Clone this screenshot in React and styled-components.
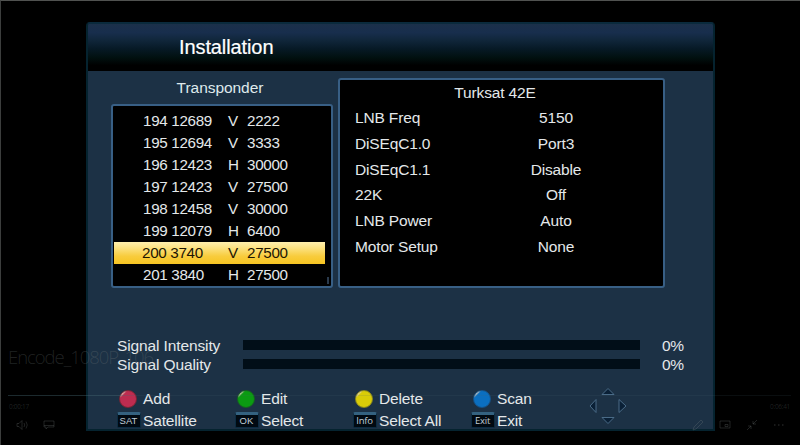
import styled, { createGlobalStyle, css } from "styled-components";

const GlobalStyle = createGlobalStyle`
  * {
    box-sizing: border-box;
  }
  body {
    margin: 0;
    background-color: #000;
    overflow: hidden;
  }
`;

const Screen = styled.div`
  position: relative;
  width: 800px;
  height: 445px;
  padding: 21px 0 0 85px;
  background-color: #000;
  border-top: 1px solid #505250;
  border-left: 1px solid #3c3e3d;
  font-family: "Liberation Sans", Arial, sans-serif;
  font-size: 15.5px;
  letter-spacing: -0.15px;
  color: #e4e8ea;
  overflow: hidden;
`;

const Window = styled.div`
  width: 629px;
  height: 409px;
  border: 2px solid #05232f;
  border-top-color: #0a2a3c;
  border-radius: 4px 4px 0 0;
  background-color: #1c3145;
  overflow: hidden;
`;

const Header = styled.div`
  height: 47px;
  padding-left: 91px;
  font-size: 20px;
  line-height: 46px;
  letter-spacing: -0.1px;
  -webkit-text-stroke: 0.2px #fff;
  color: #fff;
  background: linear-gradient(
    #1b3049 0%,
    #182e4d 18%,
    #10263a 35%,
    #071a27 52%,
    #01100f 72%,
    #000 88%
  );
`;

const Columns = styled.div`
  display: grid;
  grid-template-columns: 222px 327px;
  column-gap: 5px;
  height: 217px;
  padding-left: 23px;
`;

const ListTitle = styled.div`
  height: 33px;
  padding-right: 4px;
  line-height: 33px;
  text-align: center;
  letter-spacing: -0.05px;
  color: #dfe9ec;
`;

const panel = css`
  border: 2px solid #385f85;
  border-radius: 3px;
  background-color: #000;
`;

const List = styled.div`
  ${panel}
  position: relative;
  height: 184px;
  padding: 4px 6px 0 1px;
`;

const ListRow = styled.div`
  display: grid;
  grid-template-columns: 85px 19px 1fr;
  height: 22px;
  padding-left: 29px;
  font-size: 15.2px;
  line-height: 21px;
  letter-spacing: -0.32px;
  white-space: pre;
  ${({ $selected }) =>
    $selected &&
    css`
      padding-left: 28px;
      grid-template-columns: 86px 19px 1fr;
      color: #1c1603;
      background: linear-gradient(#fff0ae, #fbe07c 30%, #f8cc3c 65%, #f6c422);
    `}
`;

const ScrollThumb = styled.div`
  position: absolute;
  right: 2px;
  bottom: 2px;
  width: 2px;
  height: 7px;
  background-color: #2a3a4c;
`;

const Settings = styled.div`
  ${panel}
  height: 210px;
  margin-top: 7px;
`;

const SettingsTitle = styled.div`
  height: 25px;
  padding-right: 13px;
  line-height: 25px;
  text-align: center;
`;

const SettingRow = styled.div`
  display: grid;
  grid-template-columns: 140px 122px;
  height: 25.8px;
  padding-left: 15px;
  line-height: 26.6px;
  div + div {
    text-align: center;
  }
`;

const Signals = styled.div`
  padding: 48px 0 0 29px;
`;

const SignalRow = styled.div`
  display: grid;
  grid-template-columns: 125.5px 397.5px 1fr;
  align-items: center;
  height: 19px;
  line-height: 19px;
  letter-spacing: -0.12px;
`;

const Bar = styled.div`
  height: 10px;
  margin-top: -2px;
  background-color: #010e18;
`;

const Percent = styled.div`
  padding-left: 22px;
  letter-spacing: -0.3px;
`;

const Footer = styled.div`
  display: flex;
  padding: 13px 0 0 29px;
`;

const KeyColumn = styled.div`
  width: 118px;
  padding-top: 1px;
`;

const KeyRow = styled.div`
  display: grid;
  grid-template-columns: 26px 1fr;
  align-items: center;
  height: 22px;
  line-height: 22px;
  white-space: nowrap;
`;

const ColorKey = styled.div`
  width: 18px;
  height: 18px;
  margin: -1px 0 0 2px;
  border-radius: 50%;
  border: 1px solid ${({ $edge }) => $edge};
  background: linear-gradient(
    135deg,
    #e6d6c4 0 15%,
    ${({ $color }) => $color} 23%
  );
`;

const KeyCap = styled.div`
  display: flex;
  justify-content: center;
  width: 24px;
  height: 16px;
  margin: -2px 0 0 -0.5px;
  border: solid #0c2c42;
  border-width: 0 1px 1px;
  border-top: 3px solid #346280;
  border-radius: 2px;
  background-color: #010a12;
  font-family: ${({ $small }) =>
    $small ? '"Open Sans", sans-serif' : '"Liberation Sans", sans-serif'};
  font-size: 9.5px;
  line-height: 11px;
  letter-spacing: ${({ $small }) => ($small ? "-0.2px" : "0.1px")};
  color: #c0ced6;
`;

const Arrows = styled.svg`
  display: block;
`;

const Player = styled.div`
  position: absolute;
  left: 0;
  right: 0;
  bottom: 0;
  height: 104px;
  padding: 0 9px 0 7px;
  font-family: "Open Sans", "Noto Sans", sans-serif;
  color: rgba(125, 130, 130, 0.26);
  pointer-events: none;
`;

const FileName = styled.div`
  height: 54px;
  font-size: 18.5px;
  font-weight: 300;
  line-height: 32px;
  letter-spacing: -1.05px;
`;

const Track = styled.div`
  height: 1px;
  background: linear-gradient(
    90deg,
    rgba(70, 105, 115, 0.4) 0 110px,
    rgba(70, 100, 110, 0.14) 130px
  );
`;

const Times = styled.div`
  display: flex;
  justify-content: space-between;
  padding: 6px 1px 5px;
  font-size: 6.5px;
  line-height: 10px;
  letter-spacing: -0.3px;
`;

const Controls = styled.div`
  display: flex;
  justify-content: space-between;
  padding: 2px 6px 0 8px;
`;

const ControlGroup = styled.div`
  display: flex;
  gap: 15px;
`;

const transponders = [
  ["194 12689", "V", "2222"],
  ["195 12694", "V", "3333"],
  ["196 12423", "H", "30000"],
  ["197 12423", "V", "27500"],
  ["198 12458", "V", "30000"],
  ["199 12079", "H", "6400"],
  ["200 3740", "V", "27500"],
  ["201 3840", "H", "27500"],
];

const settings = [
  ["LNB Freq", "5150"],
  ["DiSEqC1.0", "Port3"],
  ["DiSEqC1.1", "Disable"],
  ["22K", "Off"],
  ["LNB Power", "Auto"],
  ["Motor Setup", "None"],
];

const keys = [
  { color: "#bd2c50", edge: "#7c2434", label: "Add", cap: "SAT", action: "Satellite" },
  { color: "#0b9b12", edge: "#14641f", label: "Edit", cap: "OK", action: "Select" },
  { color: "#d9cc08", edge: "#8d8a1c", label: "Delete", cap: "Info", action: "Select All" },
  { color: "#0b6fc0", edge: "#15538a", label: "Scan", cap: "Exit", action: "Exit" },
];

function Icon({ children }) {
  return (
    <svg width="12" height="12" viewBox="0 0 12 12" fill="none" stroke="currentColor">
      {children}
    </svg>
  );
}

function PlayerOverlay() {
  return (
    <Player>
      <FileName>Encode_1080P_106</FileName>
      <Track />
      <Times>
        <span>0:00:17</span>
        <span>0:06:41</span>
      </Times>
      <Controls>
        <ControlGroup>
          <Icon>
            <path d="M1 4.5h2l3-3v9l-3-3H1zM8 4q1.500 2 0 4M10 2.500q2.500 3.500 0 7" />
          </Icon>
          <Icon>
            <path d="M1 2h10v6H5l-2 2V8H1zM1 6.500h10" />
          </Icon>
        </ControlGroup>
        <ControlGroup>
          <Icon>
            <path d="M1 11l1-3 7-7 2 2-7 7z" />
          </Icon>
          <Icon>
            <path d="M1 2h10v7H1zM6 5.500h3v2H6z" />
          </Icon>
          <Icon>
            <path d="M11 1L7 5V2M7 5h3M1 11l4-4H2M5 7v3" />
          </Icon>
          <Icon>
            <path strokeWidth="1.5" d="M1 6h1.500M5 6h1.500M9 6h1.500" />
          </Icon>
        </ControlGroup>
      </Controls>
    </Player>
  );
}

function App() {
  return (
    <Screen>
      <GlobalStyle />
      <Window>
        <Header>Installation</Header>
        <Columns>
          <div>
            <ListTitle>Transponder</ListTitle>
            <List>
              {transponders.map(([name, polarity, rate]) => (
                <ListRow key={name} $selected={name === "200 3740"}>
                  <span>{name}</span>
                  <span>{polarity}</span>
                  <span>{rate}</span>
                </ListRow>
              ))}
              <ScrollThumb />
            </List>
          </div>
          <Settings>
            <SettingsTitle>Turksat 42E</SettingsTitle>
            {settings.map(([label, value]) => (
              <SettingRow key={label}>
                <div>{label}</div>
                <div>{value}</div>
              </SettingRow>
            ))}
          </Settings>
        </Columns>
        <Signals>
          {["Signal Intensity", "Signal Quality"].map((label) => (
            <SignalRow key={label}>
              <span>{label}</span>
              <Bar />
              <Percent>0%</Percent>
            </SignalRow>
          ))}
        </Signals>
        <Footer>
          {keys.map((item) => (
            <KeyColumn key={item.cap}>
              <KeyRow>
                <ColorKey $color={item.color} $edge={item.edge} />
                <span>{item.label}</span>
              </KeyRow>
              <KeyRow>
                <KeyCap $small={item.cap.length === 4}>{item.cap}</KeyCap>
                <span>{item.action}</span>
              </KeyRow>
            </KeyColumn>
          ))}
          <Arrows width="38" height="38" fill="#0a2036" stroke="#4a6b87">
            <path d="M19 1.500L25 7.500H13zM19 36.500L25 30.500H13zM1 19L7 12.500V25.500zM37 19L30 12.500V25.500z" />
          </Arrows>
        </Footer>
      </Window>
      <PlayerOverlay />
    </Screen>
  );
}

export default App;
